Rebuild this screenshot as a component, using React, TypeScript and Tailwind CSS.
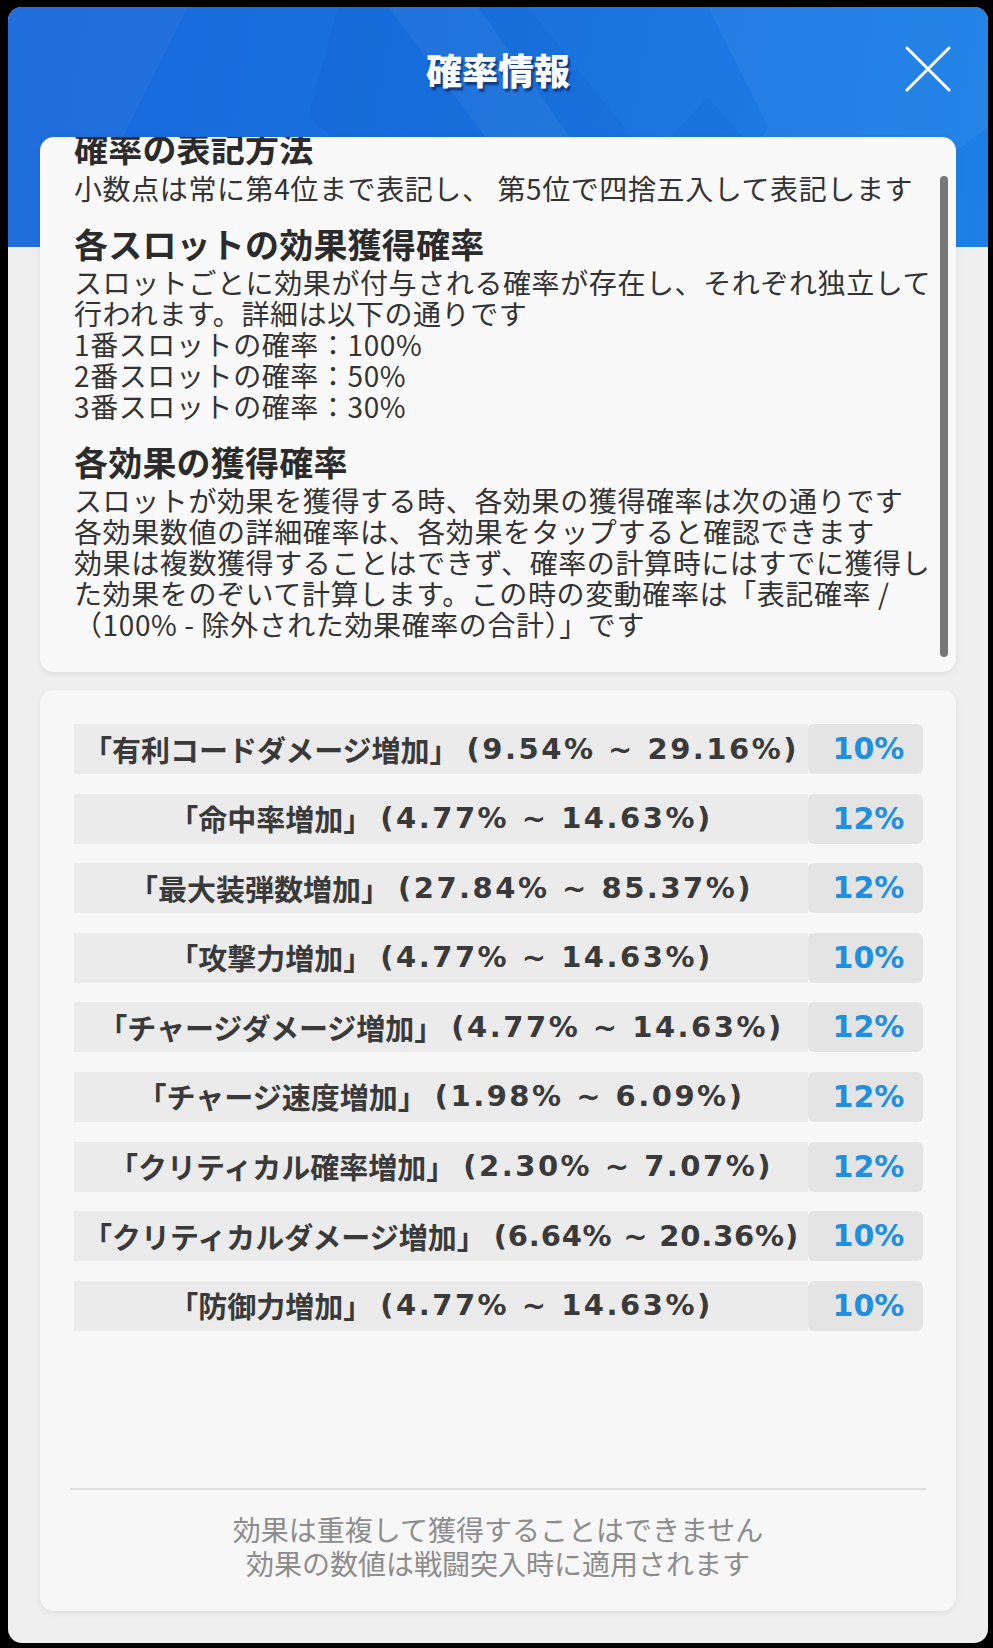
import React from 'react'

type Rate = { name: string; range: string; pct: string; tight?: boolean }

const rates: Rate[] = [
  { name: '有利コードダメージ増加', range: '(9.54% ~ 29.16%)', pct: '10%' },
  { name: '命中率増加', range: '(4.77% ~ 14.63%)', pct: '12%' },
  { name: '最大装弾数増加', range: '(27.84% ~ 85.37%)', pct: '12%' },
  { name: '攻撃力増加', range: '(4.77% ~ 14.63%)', pct: '10%' },
  { name: 'チャージダメージ増加', range: '(4.77% ~ 14.63%)', pct: '12%' },
  { name: 'チャージ速度増加', range: '(1.98% ~ 6.09%)', pct: '12%' },
  { name: 'クリティカル確率増加', range: '(2.30% ~ 7.07%)', pct: '12%' },
  { name: 'クリティカルダメージ増加', range: '(6.64% ~ 20.36%)', pct: '10%', tight: true },
  { name: '防御力増加', range: '(4.77% ~ 14.63%)', pct: '10%' },
]

function Heading({ children, first }: { children: React.ReactNode; first?: boolean }) {
  return (
    <div className={`${first ? '' : 'mt-[22px]'} mb-[5px] whitespace-nowrap text-[34px] font-bold leading-[36px] tracking-[0.2px] text-[#2b2b2b]`}>
      {children}
    </div>
  )
}

function Line({ children }: { children: React.ReactNode }) {
  return <div className="whitespace-nowrap text-[28px] leading-[31px] tracking-[0.6px] text-[#333]">{children}</div>
}

function CloseIcon() {
  return (
    <svg width="46" height="46" viewBox="0 0 46 46" fill="none">
      <path d="M2 2 L44 44 M44 2 L2 44" stroke="white" strokeWidth="3" strokeLinecap="round" />
    </svg>
  )
}

function HeaderPattern() {
  return (
    <svg className="absolute inset-0 h-full w-full" viewBox="0 0 980 240" preserveAspectRatio="none">
      <polygon points="0,0 180,0 60,240 0,240" fill="white" opacity="0.04" />
      <polygon points="330,0 520,0 640,150 450,240 300,110" fill="#0b4fc0" opacity="0.12" />
      <polygon points="380,0 470,0 640,240 560,240" fill="white" opacity="0.05" />
      <polygon points="700,0 980,0 980,120 820,240 690,240 760,120" fill="white" opacity="0.04" />
      <polygon points="560,240 700,90 830,240" fill="#0b4fc0" opacity="0.08" />
    </svg>
  )
}

export default function App() {
  return (
    <div className="min-h-[1648px] w-[993px] bg-black pl-[8px] pr-[5px] pt-[7px] pb-[5px] font-['Noto_Sans_CJK_JP',sans-serif]">
      <div className="flex w-[980px] flex-col overflow-hidden rounded-[14px] bg-[#efefef] pb-[32px]">
        {/* blue header */}
        <div className="relative h-[240px] bg-[linear-gradient(100deg,#1768db_0%,#1a72df_50%,#1d80e6_100%)]">
          <HeaderPattern />
          <div className="relative grid grid-cols-[1fr_auto_1fr] items-center px-[37px] pt-[39px]">
            <div />
            <div className="text-[36px] font-black leading-[46px] text-white [text-shadow:2px_3px_2px_rgba(0,20,70,0.6)]">
              確率情報
            </div>
            <div className="flex justify-end">
              <CloseIcon />
            </div>
          </div>
        </div>

        {/* description card */}
        <div className="relative z-10 mx-[32px] -mt-[110px] h-[535px] overflow-hidden rounded-[14px] bg-[#f9f9f9] shadow-[0_2px_6px_rgba(0,0,0,0.08)]">
          <div className="-mt-[7px] pl-[34px]">
            <Heading first>確率の表記方法</Heading>
            <div className="pt-[2px]" />
            <Line>小数点は常に第4位まで表記し、 第5位で四捨五入して表記します</Line>
            <Heading>各スロットの効果獲得確率</Heading>
            <Line>スロットごとに効果が付与される確率が存在し、それぞれ独立して</Line>
            <Line>行われます。詳細は以下の通りです</Line>
            <Line>1番スロットの確率：100%</Line>
            <Line>2番スロットの確率：50%</Line>
            <Line>3番スロットの確率：30%</Line>
            <Heading>各効果の獲得確率</Heading>
            <Line>スロットが効果を獲得する時、各効果の獲得確率は次の通りです</Line>
            <Line>各効果数値の詳細確率は、各効果をタップすると確認できます</Line>
            <Line>効果は複数獲得することはできず、確率の計算時にはすでに獲得し</Line>
            <Line>た効果をのぞいて計算します。この時の変動確率は「表記確率 /</Line>
            <Line>（100% - 除外された効果確率の合計）」です</Line>
          </div>
          <div className="absolute right-[8px] top-[39px] h-[481px] w-[8px] rounded-full bg-[#787878]" />
        </div>

        {/* rates card */}
        <div className="mx-[32px] mt-[18px] flex h-[921px] flex-col rounded-[14px] bg-[#f7f7f7] shadow-[0_2px_6px_rgba(0,0,0,0.08)]">
          <div className="flex flex-col gap-[19.6px] pl-[34px] pr-[33px] pt-[34px]">
            {rates.map((r) => (
              <div key={r.name} className="flex h-[50px]">
                <div className="flex flex-1 items-center justify-center whitespace-nowrap bg-[#ebebeb] text-[#3a3a3a]">
                  <span className="text-[29px] font-bold leading-none">「{r.name}」</span>
                  <span
                    className={`${r.tight ? 'ml-[8px] tracking-[0.8px]' : 'ml-[8px] tracking-[2.5px]'} font-['DejaVu_Sans',sans-serif] text-[29px] font-bold leading-none`}
                  >
                    {r.range}
                  </span>
                </div>
                <div className="flex w-[115px] items-center justify-center rounded-[6px] bg-[#e4e4e4] pl-[6px] font-['DejaVu_Sans',sans-serif] text-[30px] font-bold leading-none text-[#1f8fde]">
                  {r.pct}
                </div>
              </div>
            ))}
          </div>
          <div className="flex-1" />
          <div className="mx-[30px] h-[2px] bg-[#dedede]" />
          <div className="pb-[31px] pt-[22px] text-center text-[28px] leading-[34px] text-[#8c8c8c]">
            <div>効果は重複して獲得することはできません</div>
            <div>効果の数値は戦闘突入時に適用されます</div>
          </div>
        </div>
      </div>
    </div>
  )
}
